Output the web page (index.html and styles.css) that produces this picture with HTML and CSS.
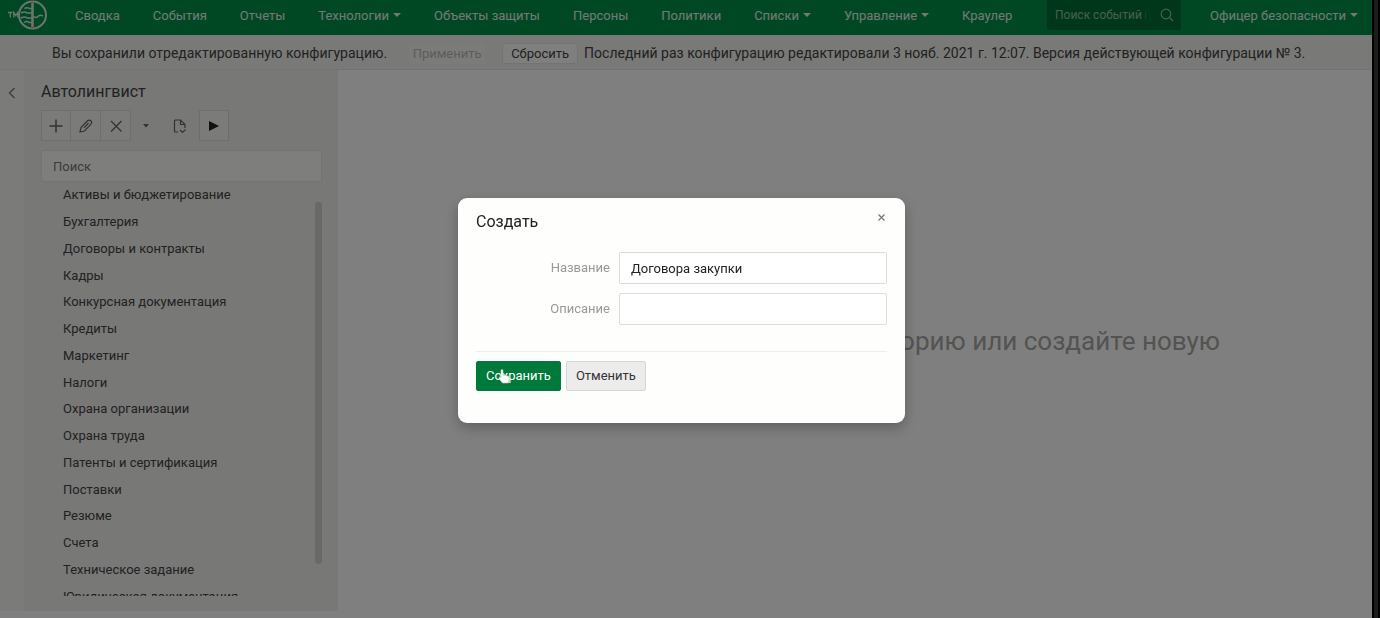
FILE: index.html
```html
<!DOCTYPE html>
<html lang="ru">
<head>
<meta charset="utf-8">
<title>Автолингвист</title>
<link rel="stylesheet" href="styles.css">
</head>
<body>
<div class="app">
  <header class="topbar">
    <a class="logo" href="#" aria-label="Главная">
      <svg width="40" height="32" viewBox="0 0 40 32" fill="none" stroke="currentColor" stroke-width="1.6">
        <path d="M0 12.500h4.500M2.300 12.500v5M5.800 17.500v-5l2 3 2-3v5" stroke-width="1.300"/>
        <circle cx="24.500" cy="15" r="13.500" stroke-width="2"/>
        <path d="M24.500 3v24" stroke-width="2.600"/>
        <path d="M16.500 8.500q3-1.500 5 0h3M13 13q4-2 6 0h5M13 18q4-2 6 0h5M16 22.500q3-2 5 0h3M26 16.500q2 2 4 0t5-.5" stroke-width="1.500"/>
      </svg>
    </a>
    <nav class="nav">
      <a href="#">Сводка</a>
      <a href="#">События</a>
      <a href="#">Отчеты</a>
      <a href="#" class="has-menu">Технологии</a>
      <a href="#">Объекты защиты</a>
      <a href="#">Персоны</a>
      <a href="#">Политики</a>
      <a href="#" class="has-menu">Списки</a>
      <a href="#" class="has-menu">Управление</a>
      <a href="#">Краулер</a>
    </nav>
    <form class="event-search">
      <input type="text" aria-label="Поиск событий" placeholder="Поиск событий по ID">
      <svg width="14" height="14" viewBox="0 0 14 14" fill="none" stroke="currentColor" stroke-width="1.200"><circle cx="6" cy="6" r="4.800"/><path d="M9.500 9.500l3.500 3.500"/></svg>
    </form>
    <a href="#" class="user has-menu">Офицер безопасности</a>
  </header>

  <div class="notice">
    <span>Вы сохранили отредактированную конфигурацию.</span>
    <button class="btn-small" disabled>Применить</button>
    <button class="btn-small btn-reset">Сбросить</button>
    <span>Последний раз конфигурацию редактировали 3 нояб. 2021 г. 12:07. Версия действующей конфигурации № 3.</span>
  </div>

  <div class="body">
    <button class="collapse" aria-label="Свернуть">
      <svg width="8" height="12" viewBox="0 0 8 12" fill="none" stroke="currentColor" stroke-width="1.300"><path d="M6.500 1L1.500 6l5 5"/></svg>
    </button>
    <aside class="sidebar">
      <h1 class="side-title">Автолингвист</h1>
      <div class="toolbar">
        <button class="tool" aria-label="Создать"><svg width="16" height="16" viewBox="0 0 16 16" fill="none" stroke="currentColor" stroke-width="1.500"><path d="M8 1.500v13M1.500 8h13"/></svg></button>
        <button class="tool" aria-label="Редактировать"><svg width="16" height="16" viewBox="0 0 16 16" fill="none" stroke="currentColor" stroke-width="1.200"><path d="M2 14l1-4.500L9.500 2.800q1.700-1.500 3.300 0t.2 3.400L6.500 13zM10.500 5L6 9.800"/></svg></button>
        <button class="tool" aria-label="Удалить"><svg width="16" height="16" viewBox="0 0 16 16" fill="none" stroke="currentColor" stroke-width="1.300"><path d="M3 3l10.500 10.500M13.500 3L3 13.500"/></svg></button>
        <button class="tool plain" aria-label="Ещё"><svg width="6" height="4" viewBox="0 0 6 4" fill="currentColor"><path d="M0 0h6L3 3.500z"/></svg></button>
        <button class="tool plain gap" aria-label="Экспорт"><svg width="16" height="16" viewBox="0 0 16 16" fill="none" stroke="currentColor" stroke-width="1.200"><path d="M6 14H3.500Q2.500 14 2.500 13V3Q2.500 2 3.500 2H8.500L13 6.500V10M8.500 2V6.500H13M8 12l2.500 2.500 3-3"/></svg></button>
        <button class="tool play" aria-label="Запустить"><svg width="10" height="12" viewBox="0 0 10 12" fill="currentColor"><path d="M0 1l10 5-10 5z"/></svg></button>
      </div>
      <input class="side-search" type="text" aria-label="Поиск" placeholder="Поиск">
      <div class="list-view">
        <ul class="list">
          <li>Активы и бюджетирование</li>
          <li>Бухгалтерия</li>
          <li>Договоры и контракты</li>
          <li>Кадры</li>
          <li>Конкурсная документация</li>
          <li>Кредиты</li>
          <li>Маркетинг</li>
          <li>Налоги</li>
          <li>Охрана организации</li>
          <li>Охрана труда</li>
          <li>Патенты и сертификация</li>
          <li>Поставки</li>
          <li>Резюме</li>
          <li>Счета</li>
          <li>Техническое задание</li>
          <li>Юридическая документация</li>
        </ul>
        <div class="scrollbar"></div>
      </div>
    </aside>
    <main class="content">
      <p class="empty">Выберите категорию или создайте новую</p>
    </main>
  </div>
</div>

<div class="backdrop">
  <section class="modal" role="dialog" aria-labelledby="modal-title">
    <div class="modal-head">
      <h2 id="modal-title">Создать</h2>
      <button class="close" aria-label="Закрыть"><svg width="7" height="7" viewBox="0 0 7 7" stroke="currentColor" stroke-width="1.200"><path d="M.5.5l6 6M6.500.5l-6 6"/></svg></button>
    </div>
    <form class="fields">
      <label for="name">Название</label>
      <input id="name" class="focused" type="text" value="Договора закупки">
      <label for="desc">Описание</label>
      <input id="desc" type="text">
    </form>
    <div class="actions">
      <button class="btn primary">Сохранить
        <svg class="pointer" width="12" height="15" viewBox="0 0 12 15" fill="#fff" stroke="#bcc8c0" stroke-width=".6"><path d="M3 1q1.300-1 2 .3V6l5 1q1.500.5 1.300 2L10.500 14H4.500L.8 9.500Q.5 8 2 8.200L3 9z"/></svg>
      </button>
      <button class="btn">Отменить</button>
    </div>
  </section>
</div>
<div class="edge"></div>
</body>
</html>
```
FILE: styles.css
```css
* { box-sizing: border-box; }

body {
  margin: 0;
  height: 100vh;
  overflow: hidden;
  background: #fff;
  color: #444;
  font: 13px/20px Roboto, "Open Sans", sans-serif;
}

button, input { font: inherit; color: inherit; margin: 0; }
button { padding: 0; border: 0; background: none; }
a { color: inherit; text-decoration: none; }
h1, h2, p, ul { margin: 0; padding: 0; font-weight: 400; }
svg { display: block; }

.app {
  display: flex;
  flex-direction: column;
  height: 100%;
  padding-right: 8px;
}

.topbar {
  display: flex;
  height: 35px;
  flex: none;
  background: #009148;
  color: #e8f2ec;
}
.logo { flex: none; width: 75px; padding-left: 8px; color: #d8e8de; }
.nav { display: flex; gap: 33px; padding-top: 6px; white-space: nowrap; }
.has-menu::after {
  content: "";
  display: inline-block;
  margin-left: 4px;
  vertical-align: 3px;
  border: 4px solid transparent;
  border-top-color: currentColor;
  border-bottom: 0;
}
.event-search {
  display: flex;
  align-items: center;
  width: 134px;
  height: 30px;
  margin-left: auto;
  padding: 0 8px;
  border-radius: 0 0 3px 3px;
  background: #006f37;
  color: #8cc0a2;
}
.event-search input {
  width: 91px;
  margin-right: 14px;
  padding: 0;
  border: 0;
  background: none;
  font-size: 12px;
}
.event-search svg { flex: none; }
.user { margin-left: 29px; padding: 6px 14px 0 0; white-space: nowrap; }

.notice {
  display: flex;
  align-items: center;
  flex: none;
  height: 35px;
  padding: 2px 0 0 52px;
  border-bottom: 1px solid #e4e4e2;
  background: #f3f2f0;
  font-size: 14px;
  white-space: nowrap;
}
.btn-small {
  width: 76px;
  height: 21px;
  margin-left: 22px;
  border-radius: 2px;
  background: #f7f7f5;
  color: #bbb;
  font-size: 13px;
  line-height: 19px;
}
.btn-reset { margin: 0 6px 0 17px; background: #fff; color: #444; border: 1px solid #e6e6e4; }

.body { display: flex; flex: 1; min-height: 0; padding-bottom: 7px; }
.collapse {
  display: flex;
  justify-content: center;
  width: 24px;
  padding-top: 17px;
  background: #f7f7f5;
  color: #777;
}
.sidebar {
  display: flex;
  flex-direction: column;
  width: 314px;
  padding: 10px 16px 15px 17px;
  background: #f0f0ee;
}
.side-title { font-size: 16px; line-height: 24px; }
.toolbar { display: flex; margin: 6px 0 9px; color: #666; }
.tool {
  display: flex;
  align-items: center;
  justify-content: center;
  width: 30px;
  height: 31px;
  border: 1px solid #dcdcda;
  border-left-width: 0;
  background: #f7f7f5;
}
.tool:first-child { border-left-width: 1px; }
.tool.plain { border-color: transparent; background: none; }
.tool.gap { margin-left: 4px; }
.tool.play { margin-left: 4px; border-left-width: 1px; color: #222; }
.side-search {
  width: 100%;
  height: 32px;
  padding: 0 11px;
  border: 1px solid #e6e6e4;
  border-radius: 2px;
  background: #fdfdfb;
}
.side-search::placeholder { color: #777; opacity: 1; }
.event-search input::placeholder { color: inherit; opacity: 1; }

.list-view { display: flex; flex: 1; min-height: 0; overflow: hidden; }
.list {
  display: grid;
  grid-auto-rows: 1fr;
  flex: 1;
  height: 428px;
  padding-left: 22px;
  list-style: none;
}
.list li { display: flex; align-items: center; }
.scrollbar { width: 7px; height: 362px; margin-top: 20px; border-radius: 3px; background: #d2d2d0; }

.content { flex: 1; padding: 252px 152px 0 0; }
.empty { font-size: 26px; line-height: 38px; text-align: right; color: #a6a6a4; }

.backdrop {
  position: fixed;
  inset: 0;
  display: flex;
  align-items: flex-start;
  justify-content: center;
  padding: 198px 17px 0 0;
  background: rgba(0, 0, 0, .5);
}
.modal {
  width: 447px;
  padding: 12px 18px 32px;
  border-radius: 9px;
  background: #fefefd;
  box-shadow: 0 5px 14px rgba(0, 0, 0, .25);
  color: #333;
}
.modal-head { display: flex; justify-content: space-between; align-items: flex-start; }
.modal-head h2 { font-size: 16px; line-height: 24px; color: #222; }
.close { width: 9px; height: 15px; color: #777; }
.fields {
  display: grid;
  grid-template-columns: 134px 1fr;
  gap: 9px;
  align-items: center;
  padding: 18px 0 26px;
  border-bottom: 1px solid #eee;
}
.fields label { text-align: right; color: #999; }
.fields input {
  width: 100%;
  height: 32px;
  padding: 0 11px;
  border: 1px solid #ddd;
  border-radius: 2px;
  background: #fff;
}
.fields .focused { border-color: #d2dfdc; color: #222; }
.actions { display: flex; gap: 5px; padding-top: 9px; }
.btn {
  position: relative;
  height: 30px;
  padding: 0 9px;
  border: 1px solid #d6d6d6;
  border-radius: 2px;
  background: #ececec;
}
.btn.primary { border-color: #007a3a; background: #007a3a; color: #fff; }
.pointer { position: absolute; left: 21px; top: 7px; }

.edge {
  position: fixed;
  inset: 0 0 0 auto;
  width: 8px;
  border: solid #000;
  border-width: 0 2px;
  background: #1c1c1a;
}
```
